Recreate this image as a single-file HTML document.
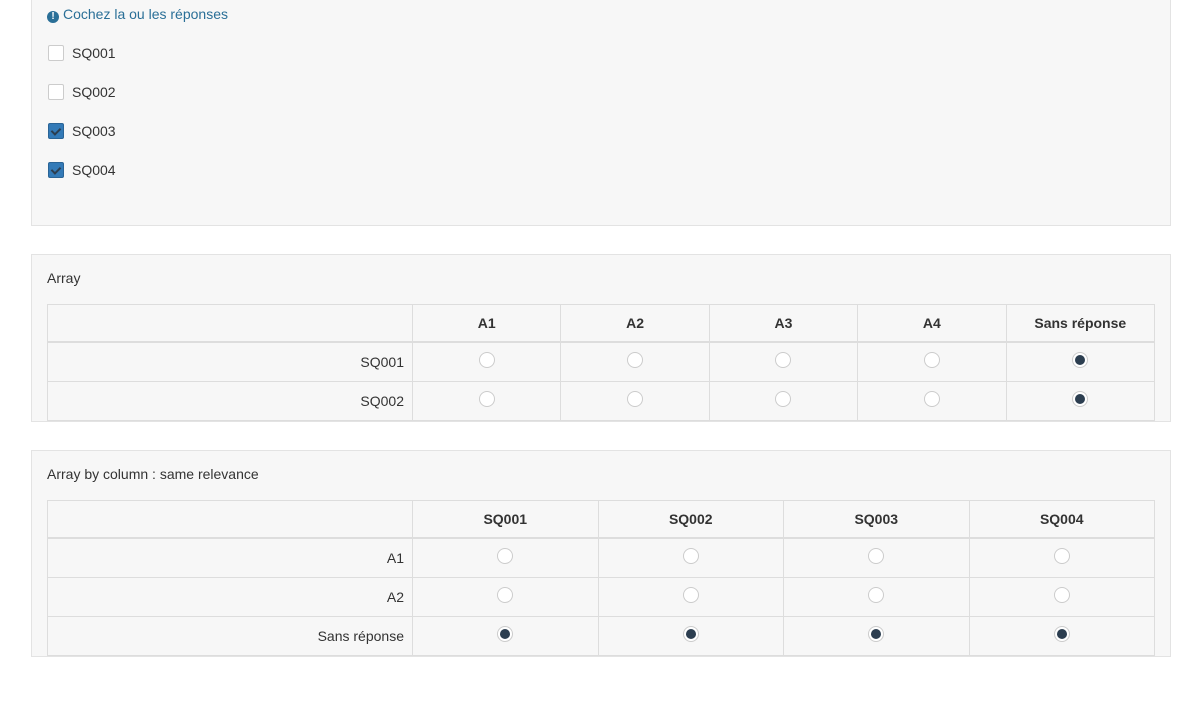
<!DOCTYPE html>
<html><head><meta charset="utf-8"><style>
body{margin:0;background:#fff;font-family:"Liberation Sans",sans-serif;font-size:14px;color:#333;width:1184px;height:710px;position:relative;overflow:hidden}
.panel{position:absolute;left:31px;width:1140px;background:#f7f7f7;border:1px solid #e3e3e3;box-sizing:border-box}
.tip{position:absolute;left:15px;color:#2a6f97;font-size:14px}
.tip i{display:inline-block;width:12px;height:12px;border-radius:50%;background:#2a6f97;color:#fff;font-style:normal;font-size:10px;font-weight:bold;text-align:center;line-height:12px;vertical-align:0px;margin-right:4px}
.cb{position:absolute;left:16px;width:14px;height:14px;border:1px solid #ccc;border-radius:2px;background:#fff}
.cb.on{background:#337ab7;border-color:#2a6496}
.cb.on::after{content:"";position:absolute;left:4px;top:2px;width:4px;height:7px;border:solid #2c3e50;border-width:0 2px 2px 0;transform:rotate(45deg)}
.cl{position:absolute;left:40px;font-size:14px}
.title{position:absolute;left:15px}
table{position:absolute;left:15px;border-collapse:collapse;table-layout:fixed;width:1108px}
td,th{border:1px solid #ddd;text-align:center;padding:0;height:38px}
thead th{border-bottom:2px solid #ddd;height:36px;font-weight:bold}
tbody td:first-child{text-align:right;padding-right:8px}
.r{display:inline-block;width:16px;height:16px;border:1px solid #ccc;border-radius:50%;background:#fff;box-sizing:border-box;position:relative;vertical-align:middle;top:-3px}
.r.on::after{content:"";position:absolute;left:2px;top:2px;width:10px;height:10px;border-radius:50%;background:#2c3e50}
</style></head><body>
<div class="panel" style="top:-5px;height:231px">
<div class="tip" style="top:10px"><i>!</i>Cochez la ou les réponses</div>
<div class="cb" style="top:49px"></div><div class="cl" style="top:49px">SQ001</div>
<div class="cb" style="top:88px"></div><div class="cl" style="top:88px">SQ002</div>
<div class="cb on" style="top:127px"></div><div class="cl" style="top:127px">SQ003</div>
<div class="cb on" style="top:166px"></div><div class="cl" style="top:166px">SQ004</div>
</div>
<div class="panel" style="top:254px;height:168px">
<div class="title" style="top:15px">Array</div>
<table style="top:49px"><colgroup><col style="width:365px"><col><col><col><col><col></colgroup>
<thead><tr><th></th><th>A1</th><th>A2</th><th>A3</th><th>A4</th><th>Sans réponse</th></tr></thead>
<tbody>
<tr><td>SQ001</td><td><span class="r"></span></td><td><span class="r"></span></td><td><span class="r"></span></td><td><span class="r"></span></td><td><span class="r on"></span></td></tr>
<tr><td>SQ002</td><td><span class="r"></span></td><td><span class="r"></span></td><td><span class="r"></span></td><td><span class="r"></span></td><td><span class="r on"></span></td></tr>
</tbody></table>
</div>
<div class="panel" style="top:450px;height:207px">
<div class="title" style="top:15px">Array by column : same relevance</div>
<table style="top:49px"><colgroup><col style="width:365px"><col><col><col><col></colgroup>
<thead><tr><th></th><th>SQ001</th><th>SQ002</th><th>SQ003</th><th>SQ004</th></tr></thead>
<tbody>
<tr><td>A1</td><td><span class="r"></span></td><td><span class="r"></span></td><td><span class="r"></span></td><td><span class="r"></span></td></tr>
<tr><td>A2</td><td><span class="r"></span></td><td><span class="r"></span></td><td><span class="r"></span></td><td><span class="r"></span></td></tr>
<tr><td>Sans réponse</td><td><span class="r on"></span></td><td><span class="r on"></span></td><td><span class="r on"></span></td><td><span class="r on"></span></td></tr>
</tbody></table>
</div>
</body></html>
